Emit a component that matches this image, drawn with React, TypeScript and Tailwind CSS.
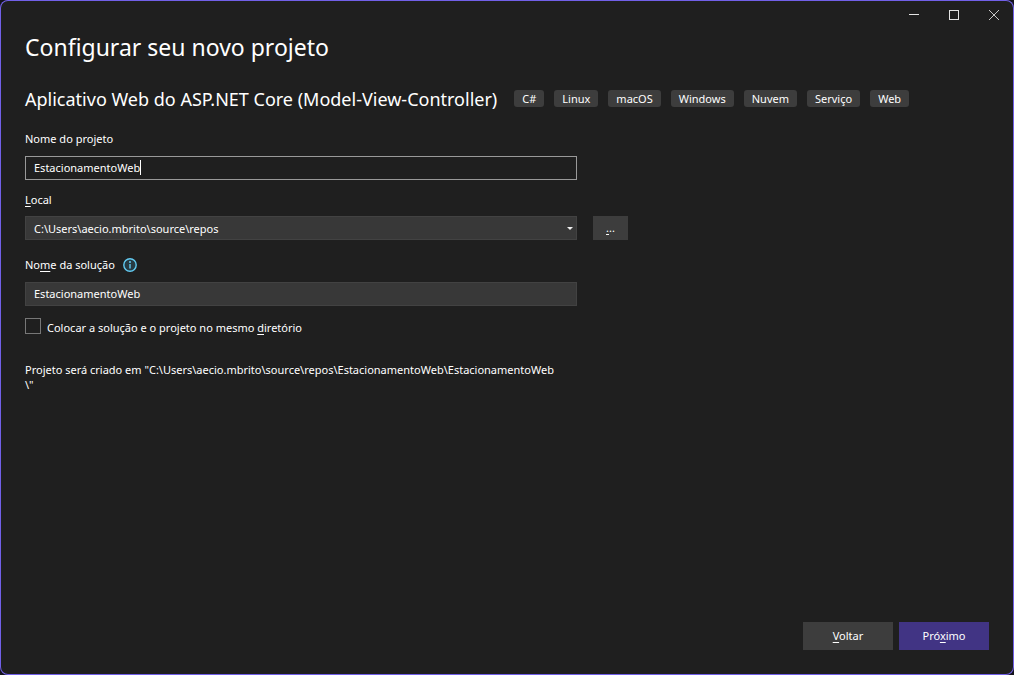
import { useState } from "react";
import type { ReactNode } from "react";

const tags = ["C#", "Linux", "macOS", "Windows", "Nuvem", "Serviço", "Web"];

function Key({ children }: { children: ReactNode }) {
  return <span className="underline underline-offset-2">{children}</span>;
}

function WindowControls() {
  const button = "flex h-[30px] w-10 items-center justify-center hover:bg-[#3d3d3d]";
  return (
    <header className="flex h-[30px] justify-end">
      <button type="button" aria-label="Minimizar" className={button}>
        <svg width="10" height="10" viewBox="0 0 10 10" shapeRendering="crispEdges">
          <path d="M0 4.5h10" stroke="#e4e4e4" />
        </svg>
      </button>
      <button type="button" aria-label="Maximizar" className={button}>
        <svg width="10" height="10" viewBox="0 0 10 10" fill="none" shapeRendering="crispEdges">
          <path d="M.5.5h9v9h-9z" stroke="#e4e4e4" />
        </svg>
      </button>
      <button type="button" aria-label="Fechar" className={button}>
        <svg width="10" height="10" viewBox="0 0 10 10" fill="none">
          <path d="M0 0l10 10M10 0L0 10" stroke="#c8c8c8" />
        </svg>
      </button>
    </header>
  );
}

function InfoIcon() {
  return (
    <svg width="14" height="14" viewBox="0 0 14 14" fill="none" aria-hidden="true">
      <circle cx="7" cy="7" r="6.2" fill="#263a42" stroke="#62cbf2" strokeWidth="1.4" />
      <path d="M7 6v4.5" stroke="#62cbf2" strokeWidth="1.4" />
      <circle cx="7" cy="4" r="1" fill="#62cbf2" />
    </svg>
  );
}

export default function App() {
  const [name, setName] = useState("EstacionamentoWeb");
  const [solution, setSolution] = useState("EstacionamentoWeb");
  const [path, setPath] = useState("C:\\Users\\aecio.mbrito\\source\\repos");

  return (
    <div className="min-h-screen bg-[#14131c] font-['Noto_Sans',sans-serif] text-[11px] text-white">
      <div className="flex min-h-screen flex-col rounded-lg bg-[#1f1f1f] inset-ring inset-ring-[#7160e8]">
        <WindowControls />
        <main className="flex grow flex-col px-[25px] pb-[25px]">
          <h1 className="text-[23px] leading-[34px]">Configurar seu novo projeto</h1>
          <div className="mt-[22px] flex items-center gap-[17px]">
            <h2 className="text-lg leading-[26px] whitespace-nowrap">
              Aplicativo Web do ASP.NET Core (Model-View-Controller)
            </h2>
            <ul className="flex gap-[10px] pb-[2px]">
              {tags.map((tag) => (
                <li key={tag} className="rounded-[3px] bg-[#3d3d3d] px-2 leading-[17px]">
                  {tag}
                </li>
              ))}
            </ul>
          </div>

          <form className="mt-[19px] flex grow flex-col" onSubmit={(e) => e.preventDefault()}>
            <label htmlFor="name" className="self-start leading-4">Nome do projeto</label>
            <div className="relative mt-[9px] w-full max-w-[552px]">
              <input
                id="name"
                value={name}
                onChange={(e) => setName(e.target.value)}
                className="block h-6 w-full border border-[#999999] bg-[#1f1f1f] px-2 pb-[2px] outline-none"
              />
              <div
                aria-hidden="true"
                className="pointer-events-none absolute inset-y-0 left-0 flex items-center pb-px pl-[9px]"
              >
                <span className="invisible">{name}</span>
                <span className="h-[15px] w-px bg-white" />
              </div>
            </div>

            <label htmlFor="path" className="mt-3 self-start leading-4"><Key>L</Key>ocal</label>
            <div className="mt-2 flex gap-4">
              <div className="relative w-full max-w-[552px]">
                <select
                  id="path"
                  value={path}
                  onChange={(e) => setPath(e.target.value)}
                  className="block h-6 w-full appearance-none border border-[#424242] bg-[#383838] px-2 pt-[2px] outline-none"
                >
                  <option>{path}</option>
                </select>
                <svg
                  className="pointer-events-none absolute top-[11px] right-1"
                  width="6"
                  height="3"
                  viewBox="0 0 6 3"
                  aria-hidden="true"
                >
                  <path d="M0 0h6L3 3z" fill="#f0f0f0" />
                </svg>
              </div>
              <button type="button" aria-label="Procurar" className="h-6 w-[35px] shrink-0 bg-[#3d3d3d]">
                <Key>.</Key>..
              </button>
            </div>

            <div className="mt-[17px] flex items-center gap-2">
              <label htmlFor="solution" className="leading-4">No<Key>m</Key>e da solução</label>
              <InfoIcon />
            </div>
            <input
              id="solution"
              value={solution}
              onChange={(e) => setSolution(e.target.value)}
              className="mt-[9px] h-6 w-full max-w-[552px] border border-[#424242] bg-[#383838] px-2 pb-[2px] outline-none"
            />

            <label className="mt-3 flex items-start gap-[6px] self-start leading-[19px]">
              <input type="checkbox" className="size-4 appearance-none border border-[#777777] checked:bg-[#7160e8]" />
              <span>Colocar a solução e o projeto no mesmo <Key>d</Key>iretório</span>
            </label>

            <p className="mt-[25px] max-w-[552px] leading-[15px] break-words whitespace-pre-line">
              {`Projeto será criado em "${path}\\${name}\\${solution}\n\\"`}
            </p>

            <div className="mt-auto flex justify-end gap-[6px]">
              <button type="button" className="h-7 w-[90px] bg-[#3d3d3d]"><Key>V</Key>oltar</button>
              <button type="submit" className="h-7 w-[90px] bg-[#413484]">Pró<Key>x</Key>imo</button>
            </div>
          </form>
        </main>
      </div>
    </div>
  );
}
